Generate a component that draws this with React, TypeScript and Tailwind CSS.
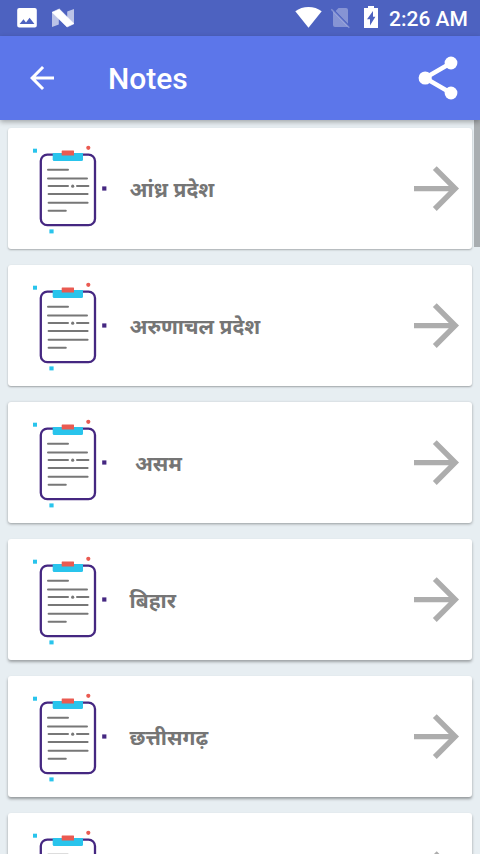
const items = [
    { name: "आंध्र प्रदेश", shadow: "shadow-[0_1px_2px_rgba(0,0,0,0.28)]" },
    { name: "अरुणाचल प्रदेश", shadow: "shadow-[0_1px_2px_rgba(0,0,0,0.32)]" },
    { name: "\u00a0असम", shadow: "shadow-[0_1px_3px_rgba(0,0,0,0.36)]" },
    { name: "बिहार", shadow: "shadow-[0_2px_3px_rgba(0,0,0,0.32)]" },
    { name: "छत्तीसगढ़", shadow: "shadow-[0_2px_3px_rgba(0,0,0,0.36)]" },
    { name: "", shadow: "shadow-[0_2px_3px_rgba(0,0,0,0.36)]" },
];

function StatusBar() {
    return (
        <div className="flex h-9 shrink-0 items-center bg-[#4d62c0]">
            <svg className="h-9 w-[380px] shrink-0" viewBox="0 0 380 36" fill="#fff">
                {/* picture */}
                <path fillRule="evenodd" d="M19.2 8H34.8Q36.8 8 36.8 10V25.5Q36.8 27.5 34.8 27.5H19.2Q17.2 27.5 17.2 25.5V10Q17.2 8 19.2 8ZM19.6 24H34.4L29.6 17.8L26 22.4L23.5 19.3Z" />
                {/* Android N */}
                <path d="M52 12L58.8 15V24.5L52 27ZM67.2 11.5L74 9V24L67.2 21Z" fillOpacity="0.62" />
                <path d="M52 12.3L59.3 9L74 23.7L67 27Z" stroke="#fff" strokeWidth="0.6" />
                {/* wifi */}
                <path d="M308.5 27.8L295.3 11.3Q301 7 308.5 7T321.7 11.3Z" />
                {/* no sim */}
                <path d="M338.5 8H346Q348 8 348 10V23.8L335.6 11ZM333 11.4L348 26.8Q347 27 346 27H335Q333 27 333 25Z" fillOpacity="0.32" />
                <path d="M331.3 9.2L349.3 27.7" stroke="#fff" strokeOpacity="0.3" strokeWidth="1.5" />
                {/* charging battery */}
                <path fillRule="evenodd" d="M368 6H374V8H378V28H364V8H368ZM373 11L367 19.2H370V25.6L375.4 16.8H373Z" />
            </svg>
            <span className="mt-0.5 ml-[9px] whitespace-nowrap font-[Roboto,sans-serif] text-[21px] leading-9 font-medium text-white">2:26 AM</span>
        </div>
    );
}

function AppBar() {
    return (
        <header className="relative z-10 flex h-[84px] shrink-0 items-center bg-[#5c76ea] pl-6 shadow-[0_2px_5px_rgba(0,0,0,0.3)]">
            <svg className="size-9" viewBox="0 0 24 24" fill="#fff">
                <path d="M20 11H7.83l5.59-5.59L12 4l-8 8 8 8 1.41-1.41L7.83 13H20v-2z" />
            </svg>
            <h1 className="mt-0.5 ml-12 font-[Roboto,sans-serif] text-[30px] leading-9 font-medium text-white">Notes</h1>
            <svg className="mr-4 ml-auto h-12 w-12" viewBox="0 0 48 48" fill="#fff">
                <path d="M35 9L9 24L35 39" fill="none" stroke="#fff" strokeWidth="4.4" />
                <circle cx="35" cy="9" r="6.4" />
                <circle cx="9.2" cy="24" r="6.6" />
                <circle cx="35" cy="39" r="6.4" />
            </svg>
        </header>
    );
}

function Clipboard() {
    return (
        <svg className="mt-1 h-[110px] w-[100px] shrink-0" viewBox="0 0 100 110">
            <rect x="20.8" y="18.6" width="54.2" height="70.6" rx="6.5" fill="none" stroke="#452781" strokeWidth="2.3" />
            <path d="M32.7 17H63V23.5Q63 25 61.5 25H34.2Q32.7 25 32.7 23.5Z" fill="#29c4ec" />
            <rect x="41.7" y="14.4" width="12.3" height="5" rx="0.5" fill="#ea5a51" />
            <rect x="13" y="12.7" width="4" height="4" fill="#29c4ec" />
            <rect x="29.4" y="93.4" width="4.2" height="4" fill="#29c4ec" />
            <rect x="82.2" y="50.4" width="4.2" height="4.2" fill="#452781" />
            <circle cx="68.3" cy="11.8" r="2.1" fill="#ea5a51" />
            <g stroke="#777" strokeWidth="2" strokeLinecap="round">
                <path d="M28 33.8H48M28 42.5H67M28.6 50H48M57 50H68.4M28.6 58H67.6M28.6 66.7H67.6M28.6 74.7H45.8" />
            </g>
            <circle cx="52.7" cy="50.2" r="1.6" fill="#777" />
        </svg>
    );
}

function NoteCard({ name, shadow }: { name: string; shadow: string }) {
    return (
        <li className={`flex h-[121px] shrink-0 items-center rounded-[3px] bg-white pr-3 pl-3 ${shadow}`}>
            <Clipboard />
            <span className="mt-1.5 ml-[9.5px] flex-1 whitespace-pre font-['Noto_Sans_Devanagari','Noto_Sans',sans-serif] text-[21px] leading-8 font-bold text-[#757575]">
                {name}
            </span>
            <svg className="h-[46px] w-[46px] shrink-0" viewBox="0 0 46 46" fill="none" stroke="#adadad" strokeWidth="5.4">
                <path d="M0 22.6H41M20.8 2.2L41.2 22.6L20.8 43" />
            </svg>
        </li>
    );
}

export default function App() {
    return (
        <div className="flex h-[854px] w-[480px] flex-col overflow-hidden bg-[#e7eef2]">
            <StatusBar />
            <AppBar />
            <main className="relative min-h-0 flex-1 overflow-hidden">
                <ul className="flex flex-col gap-4 px-2 pt-2">
                    {items.map((item, i) => (
                        <NoteCard key={i} name={item.name} shadow={item.shadow} />
                    ))}
                </ul>
                {/* scroll thumb */}
                <div className="absolute top-0 right-0 h-[127px] w-1.5 bg-[#a9aeb1]" />
            </main>
        </div>
    );
}
